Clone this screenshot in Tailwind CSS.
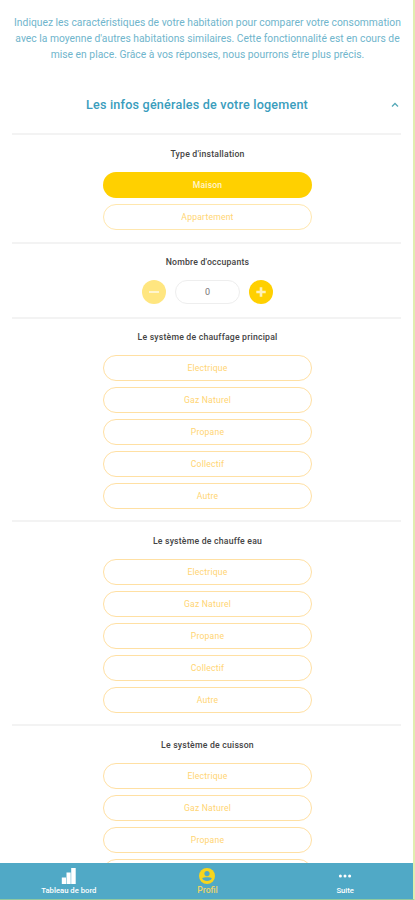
<!DOCTYPE html>
<html lang="fr">
<head>
<meta charset="utf-8">
<title>Profil</title>
<script src="https://cdn.jsdelivr.net/npm/@tailwindcss/browser@4"></script>
</head>
<body class="bg-white font-[Roboto,sans-serif]">
<div class="flex h-[900px] w-[415px] flex-col overflow-hidden border-r-2 border-b border-r-[#e0edb0] border-b-[#8fc9a0]">
  <main class="min-h-0 flex-1 overflow-hidden pl-3">
    <p class="-ml-3 h-[90px] w-[415px] pt-[15px] text-center text-[10.3px] leading-4 tracking-[0.01px] whitespace-nowrap text-[#6fb5cc]">Indiquez les caractéristiques de votre habitation pour comparer votre consommation<br>avec la moyenne d'autres habitations similaires. Cette fonctionnalité est en cours de<br>mise en place. Grâce à vos réponses, nous pourrons être plus précis.</p>
    <div class="flex h-[43px] w-[389px] items-start pt-1.5">
      <h1 class="w-[370px] text-center text-[12.6px] leading-[18px] font-medium tracking-[0.2px] whitespace-nowrap text-[#3a9dbd]">Les infos générales de votre logement</h1>
      <svg class="mt-[5px] ml-[9px] h-2 w-2" viewBox="0 0 8 8" fill="none" stroke="#55a9b8" stroke-width="1.3"><path d="M1 5.5 4 2.5 7 5.5"/></svg>
    </div>

    <section class="flex h-[109px] w-[389px] flex-col items-center border-t-2 border-[#f3f3f3] pt-3 pl-0.5">
      <h2 class="mb-[11px] text-[8.7px] leading-[14px] font-medium tracking-[0.2px] text-[#444]">Type d'installation</h2>
      <div class="flex w-[209px] flex-col gap-1.5 text-center text-[8.6px] leading-6 tracking-[0.2px] text-[#ffd573]">
        <button class="h-[26px] rounded-full bg-[#ffd000] font-medium text-[#fff5cf]">Maison</button>
        <button class="h-[26px] rounded-full border border-[#ffe7ae]">Appartement</button>
      </div>
    </section>

    <section class="flex h-[75px] w-[389px] flex-col items-center border-t-2 border-[#f3f3f3] pt-[11px] pl-0.5">
      <h2 class="mb-[11px] text-[8.7px] leading-[14px] font-medium tracking-[0.2px] text-[#444]">Nombre d'occupants</h2>
      <div class="flex items-center gap-[9px]">
        <button class="flex h-6 w-6 items-center justify-center rounded-full bg-[#ffe680]">
          <svg class="h-3 w-3" viewBox="0 0 12 12" stroke="#fff5ce" stroke-width="2"><path d="M1 6H11"/></svg>
        </button>
        <div class="h-6 w-[65px] rounded-full border border-[#eee] text-center text-[9px] leading-[23px] text-[#777]">0</div>
        <button class="flex h-6 w-6 items-center justify-center rounded-full bg-[#ffd000]">
          <svg class="h-3 w-3" viewBox="0 0 12 12" stroke="#fff2b8" stroke-width="2.6"><path d="M1.3 6H10.7M6 1.3V10.7"/></svg>
        </button>
      </div>
    </section>

    <section class="flex h-[203px] w-[389px] flex-col items-center border-t-2 border-[#f3f3f3] pt-[11px] pl-0.5">
      <h2 class="mb-[11px] text-[8.7px] leading-[14px] font-medium tracking-[0.2px] text-[#444]">Le système de chauffage principal</h2>
      <div class="flex w-[209px] flex-col gap-1.5 text-center text-[8.6px] leading-6 tracking-[0.2px] text-[#ffd573]">
        <button class="h-[26px] rounded-full border border-[#ffe0a3]">Electrique</button>
        <button class="h-[26px] rounded-full border border-[#ffe0a3]">Gaz Naturel</button>
        <button class="h-[26px] rounded-full border border-[#ffe0a3]">Propane</button>
        <button class="h-[26px] rounded-full border border-[#ffe0a3]">Collectif</button>
        <button class="h-[26px] rounded-full border border-[#ffe0a3]">Autre</button>
      </div>
    </section>

    <section class="flex h-[204px] w-[389px] flex-col items-center border-t-2 border-[#f3f3f3] pt-3 pl-0.5">
      <h2 class="mb-[11px] text-[8.7px] leading-[14px] font-medium tracking-[0.2px] text-[#444]">Le système de chauffe eau</h2>
      <div class="flex w-[209px] flex-col gap-1.5 text-center text-[8.6px] leading-6 tracking-[0.2px] text-[#ffd573]">
        <button class="h-[26px] rounded-full border border-[#ffe0a3]">Electrique</button>
        <button class="h-[26px] rounded-full border border-[#ffe0a3]">Gaz Naturel</button>
        <button class="h-[26px] rounded-full border border-[#ffe0a3]">Propane</button>
        <button class="h-[26px] rounded-full border border-[#ffe0a3]">Collectif</button>
        <button class="h-[26px] rounded-full border border-[#ffe0a3]">Autre</button>
      </div>
    </section>

    <section class="flex h-[204px] w-[389px] flex-col items-center border-t-2 border-[#f3f3f3] pt-3 pl-0.5">
      <h2 class="mb-[11px] text-[8.7px] leading-[14px] font-medium tracking-[0.2px] text-[#444]">Le système de cuisson</h2>
      <div class="flex w-[209px] flex-col gap-1.5 text-center text-[8.6px] leading-6 tracking-[0.2px] text-[#ffd573]">
        <button class="h-[26px] rounded-full border border-[#ffe0a3]">Electrique</button>
        <button class="h-[26px] rounded-full border border-[#ffe0a3]">Gaz Naturel</button>
        <button class="h-[26px] rounded-full border border-[#ffe0a3]">Propane</button>
        <button class="h-[26px] rounded-full border border-[#ffe0a3]" aria-label="Collectif"></button>
      </div>
    </section>
  </main>

  <nav class="grid h-9 shrink-0 grid-cols-3 bg-[#50a9c6] text-center text-[7.7px] font-medium text-white">
    <a class="flex flex-col items-center pt-[5px]">
      <svg class="h-4 w-4" viewBox="0 0 16 16" fill="#fff"><path d="M.8 9.5h4.2V16H.8zM5.5 4.5h4.2V16H5.5zM10.2 0h4.5v16h-4.5z"/></svg>
      <span class="mt-[3px] leading-[8px]">Tableau de bord</span>
    </a>
    <a class="flex flex-col items-center pt-[5px] pl-0.5 text-[#ecd56a]">
      <svg class="h-4 w-4" viewBox="0 0 16 16"><circle cx="8" cy="8" r="8" fill="#f8d51c"/><circle cx="8" cy="5.6" r="2.6" fill="#50a9c6"/><path d="M3.2 10.2C5 8.8 11 8.8 12.8 10.2 11.5 13.8 4.5 13.8 3.2 10.2Z" fill="#50a9c6"/></svg>
      <span class="mt-[2px] text-[8.6px] leading-[9px]">Profil</span>
    </a>
    <a class="flex flex-col items-center pt-[5px] pl-0.5">
      <svg class="h-4 w-4" viewBox="0 0 16 16" fill="#fff"><circle cx="3.4" cy="8" r="1.5"/><circle cx="8" cy="8" r="1.5"/><circle cx="12.6" cy="8" r="1.5"/></svg>
      <span class="mt-[3px] leading-[8px]">Suite</span>
    </a>
  </nav>
</div>
</body>
</html>
